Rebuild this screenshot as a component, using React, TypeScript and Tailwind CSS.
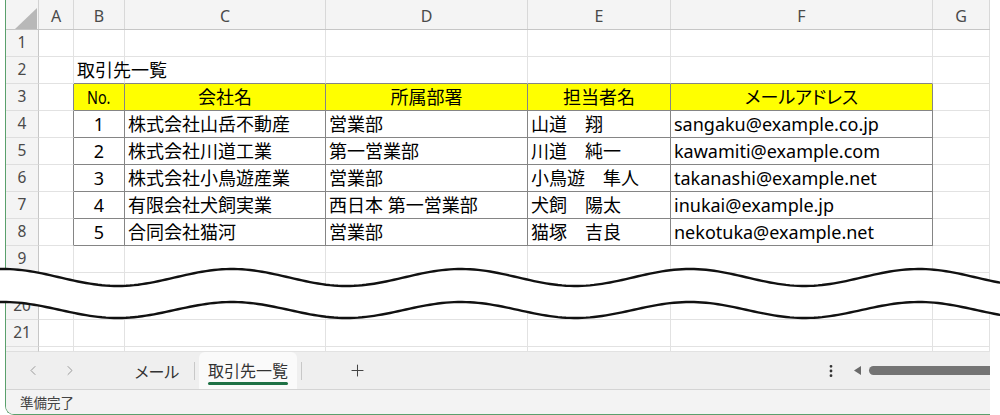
import { ChevronLeft, ChevronRight, Plus, EllipsisVertical } from 'lucide-react';

type Cell = { text: string; center?: boolean; header?: boolean; narrow?: boolean; palt?: boolean };

const COLS = [
  { key: 'A', w: 'w-[35px]' },
  { key: 'B', w: 'w-[51px]' },
  { key: 'C', w: 'w-[201px]' },
  { key: 'D', w: 'w-[202px]' },
  { key: 'E', w: 'w-[143px]' },
  { key: 'F', w: 'w-[262px]' },
  { key: 'G', w: 'flex-1' },
];

const TABLE_COLS = ['B', 'C', 'D', 'E', 'F'];

const clients = [
  ['1', '株式会社山岳不動産', '営業部', '山道　翔', 'sangaku@example.co.jp'],
  ['2', '株式会社川道工業', '第一営業部', '川道　純一', 'kawamiti@example.com'],
  ['3', '株式会社小鳥遊産業', '営業部', '小鳥遊　隼人', 'takanashi@example.net'],
  ['4', '有限会社犬飼実業', '西日本 第一営業部', '犬飼　陽太', 'inukai@example.jp'],
  ['5', '合同会社猫河', '営業部', '猫塚　吉良', 'nekotuka@example.net'],
];

function cellsFor(row: number): Record<string, Cell> {
  if (row === 2) return { B: { text: '取引先一覧' } };
  if (row === 3)
    return {
      B: { text: 'No.', center: true, header: true, narrow: true },
      C: { text: '会社名', center: true, header: true },
      D: { text: '所属部署', center: true, header: true },
      E: { text: '担当者名', center: true, header: true },
      F: { text: 'メールアドレス', center: true, header: true, palt: true },
    };
  if (row >= 4 && row <= 8) {
    const d = clients[row - 4];
    return {
      B: { text: d[0], center: true },
      C: { text: d[1] },
      D: { text: d[2] },
      E: { text: d[3] },
      F: { text: d[4] },
    };
  }
  return {};
}

const ROWS = [
  { n: 1, label: '1', h: 'h-[27px]' },
  { n: 2, label: '2', h: 'h-[27px]' },
  { n: 3, label: '3', h: 'h-[27px]' },
  { n: 4, label: '4', h: 'h-[27px]' },
  { n: 5, label: '5', h: 'h-[27px]' },
  { n: 6, label: '6', h: 'h-[27px]' },
  { n: 7, label: '7', h: 'h-[27px]' },
  { n: 8, label: '8', h: 'h-[27px]' },
  { n: 9, label: '9', h: 'h-[27px]' },
  { n: 19, label: '', h: 'h-[20px]' },
  { n: 20, label: '20', h: 'h-[27px]' },
  { n: 21, label: '21', h: 'h-[27px]' },
  { n: 22, label: '', h: 'flex-1' },
];

function GridRow({ n, label, h }: { n: number; label: string; h: string }) {
  const cells = cellsFor(n);
  const inTable = n >= 3 && n <= 8;
  return (
    <div className={`flex ${h} shrink-0`}>
      <div className="w-[33px] shrink-0 flex items-center justify-center bg-[#f4f4f4] border-r border-b border-r-[#c6c6c6] border-b-[#dedede] text-[15.5px] text-[#4a4a4a]">
        {label}
      </div>
      {COLS.map((col) => {
        const c = cells[col.key];
        const isTableCol = TABLE_COLS.includes(col.key);
        const rightDark = inTable && col.key !== 'G';
        const bottomDark = isTableCol && n >= 2 && n <= 8;
        return (
          <div
            key={col.key}
            className={`${col.w} shrink-0 flex items-center border-r border-b ${rightDark ? 'border-r-[#858585]' : 'border-r-[#e2e2e2]'} ${bottomDark ? 'border-b-[#858585]' : 'border-b-[#e2e2e2]'} ${c?.header ? 'bg-[#ffff00]' : ''} ${c?.center ? 'justify-center' : 'pl-[3px]'}`}
          >
            {c && (
              <span
                className={`whitespace-nowrap text-[18px] leading-none text-black ${c.narrow ? 'inline-block scale-x-80' : ''} ${c.palt ? '[font-feature-settings:"palt"]' : ''}`}
              >
                {c.text}
              </span>
            )}
          </div>
        );
      })}
    </div>
  );
}

function Wave() {
  const period = 229;
  const phase = 3;
  const upper: string[] = [];
  const lower: string[] = [];
  for (let x = -10; x <= 1010; x += 4) {
    const k = Math.cos((2 * Math.PI * (x - phase)) / period);
    upper.push(`${x},${(22.5 - 8.5 * k).toFixed(2)}`);
    lower.push(`${x},${(55 - 8 * k).toFixed(2)}`);
  }
  const fill = `M${upper.join(' L')} L${[...lower].reverse().join(' L')} Z`;
  return (
    <svg className="absolute left-0 top-[255px]" width="1000" height="80" viewBox="0 0 1000 80">
      <path d={fill} fill="#ffffff" />
      <path d={`M${upper.join(' L')}`} fill="none" stroke="#111" strokeWidth="2.4" />
      <path d={`M${lower.join(' L')}`} fill="none" stroke="#111" strokeWidth="2.4" />
    </svg>
  );
}

export default function App() {
  return (
    <div className="relative w-[1000px] h-[415px] bg-white overflow-hidden font-['Noto_Sans','Noto_Sans_CJK_JP',sans-serif]">
      <div className="ml-[5px] w-[985px] h-full flex flex-col border-l border-b border-[#5aa06c] rounded-bl-[9px] overflow-hidden">
        {/* grid */}
        <div className="h-[352px] shrink-0 flex flex-col">
          <div className="flex h-[30px] shrink-0 bg-[#f4f4f4] border-b border-[#c6c6c6]">
            <div className="w-[33px] shrink-0 relative border-r border-[#d2d2d2]">
              <svg className="absolute left-[9px] top-[8px]" width="22" height="21" viewBox="0 0 22 21">
                <polygon points="0,21 22,21 22,0" fill="#b8b8b8" />
              </svg>
            </div>
            {COLS.map((col) => (
              <div
                key={col.key}
                className={`${col.w} shrink-0 flex items-center justify-center border-r border-[#d8d8d8] text-[16px] text-[#4a4a4a] pt-[3px]`}
              >
                {col.key}
              </div>
            ))}
          </div>
          {ROWS.map((r) => (
            <GridRow key={r.n} n={r.n} label={r.label} h={r.h} />
          ))}
        </div>

        {/* sheet tabs */}
        <div className="h-[38px] shrink-0 flex items-center bg-[#efefef] border-b border-[#d4d4d4] text-[16px] text-[#333] font-['Noto_Sans_CJK_JP',sans-serif]">
          <div className="ml-[19px] w-[16px] flex justify-center">
            <ChevronLeft size={17} strokeWidth={1.5} className="text-[#9a9a9a]" />
          </div>
          <div className="ml-[21px] w-[16px] flex justify-center">
            <ChevronRight size={17} strokeWidth={1.5} className="text-[#9a9a9a]" />
          </div>
          <div className="ml-[42px] w-[74px] flex justify-center [font-feature-settings:'palt']">メール</div>
          <div className="w-px h-[18px] bg-[#c8c8c8]" />
          <div className="ml-[4px] w-[98px] h-full flex justify-center bg-[#fafafa] rounded-t-[6px]">
            <div className="flex flex-col items-center pt-[6px]">
              <span className="leading-[24px]">取引先一覧</span>
              <span className="w-[80px] h-[2.5px] bg-[#1e7145] rounded-full" />
            </div>
          </div>
          <div className="ml-[4px] w-px h-[18px] bg-[#c8c8c8]" />
          <div className="ml-[45px] w-[20px] flex justify-center">
            <Plus size={19} strokeWidth={1.3} className="text-[#444]" />
          </div>
          <div className="flex-1" />
          <div className="w-[16px] flex justify-center">
            <EllipsisVertical size={16} strokeWidth={2.2} className="text-[#333]" />
          </div>
          <div className="ml-[15px] w-[7px] flex justify-center">
            <svg width="7" height="9" viewBox="0 0 7 9">
              <polygon points="0,4.5 7,0 7,9" fill="#6a6a6a" />
            </svg>
          </div>
          <div className="ml-[8px] w-[121px] h-[9px] rounded-l-full bg-[#747474]" />
        </div>

        {/* status bar */}
        <div className="flex-1 flex items-center bg-[#f3f3f3] pl-[14px] text-[13.5px] text-[#444] font-['Noto_Sans_CJK_JP',sans-serif]">
          準備完了
        </div>
      </div>
      <Wave />
    </div>
  );
}
